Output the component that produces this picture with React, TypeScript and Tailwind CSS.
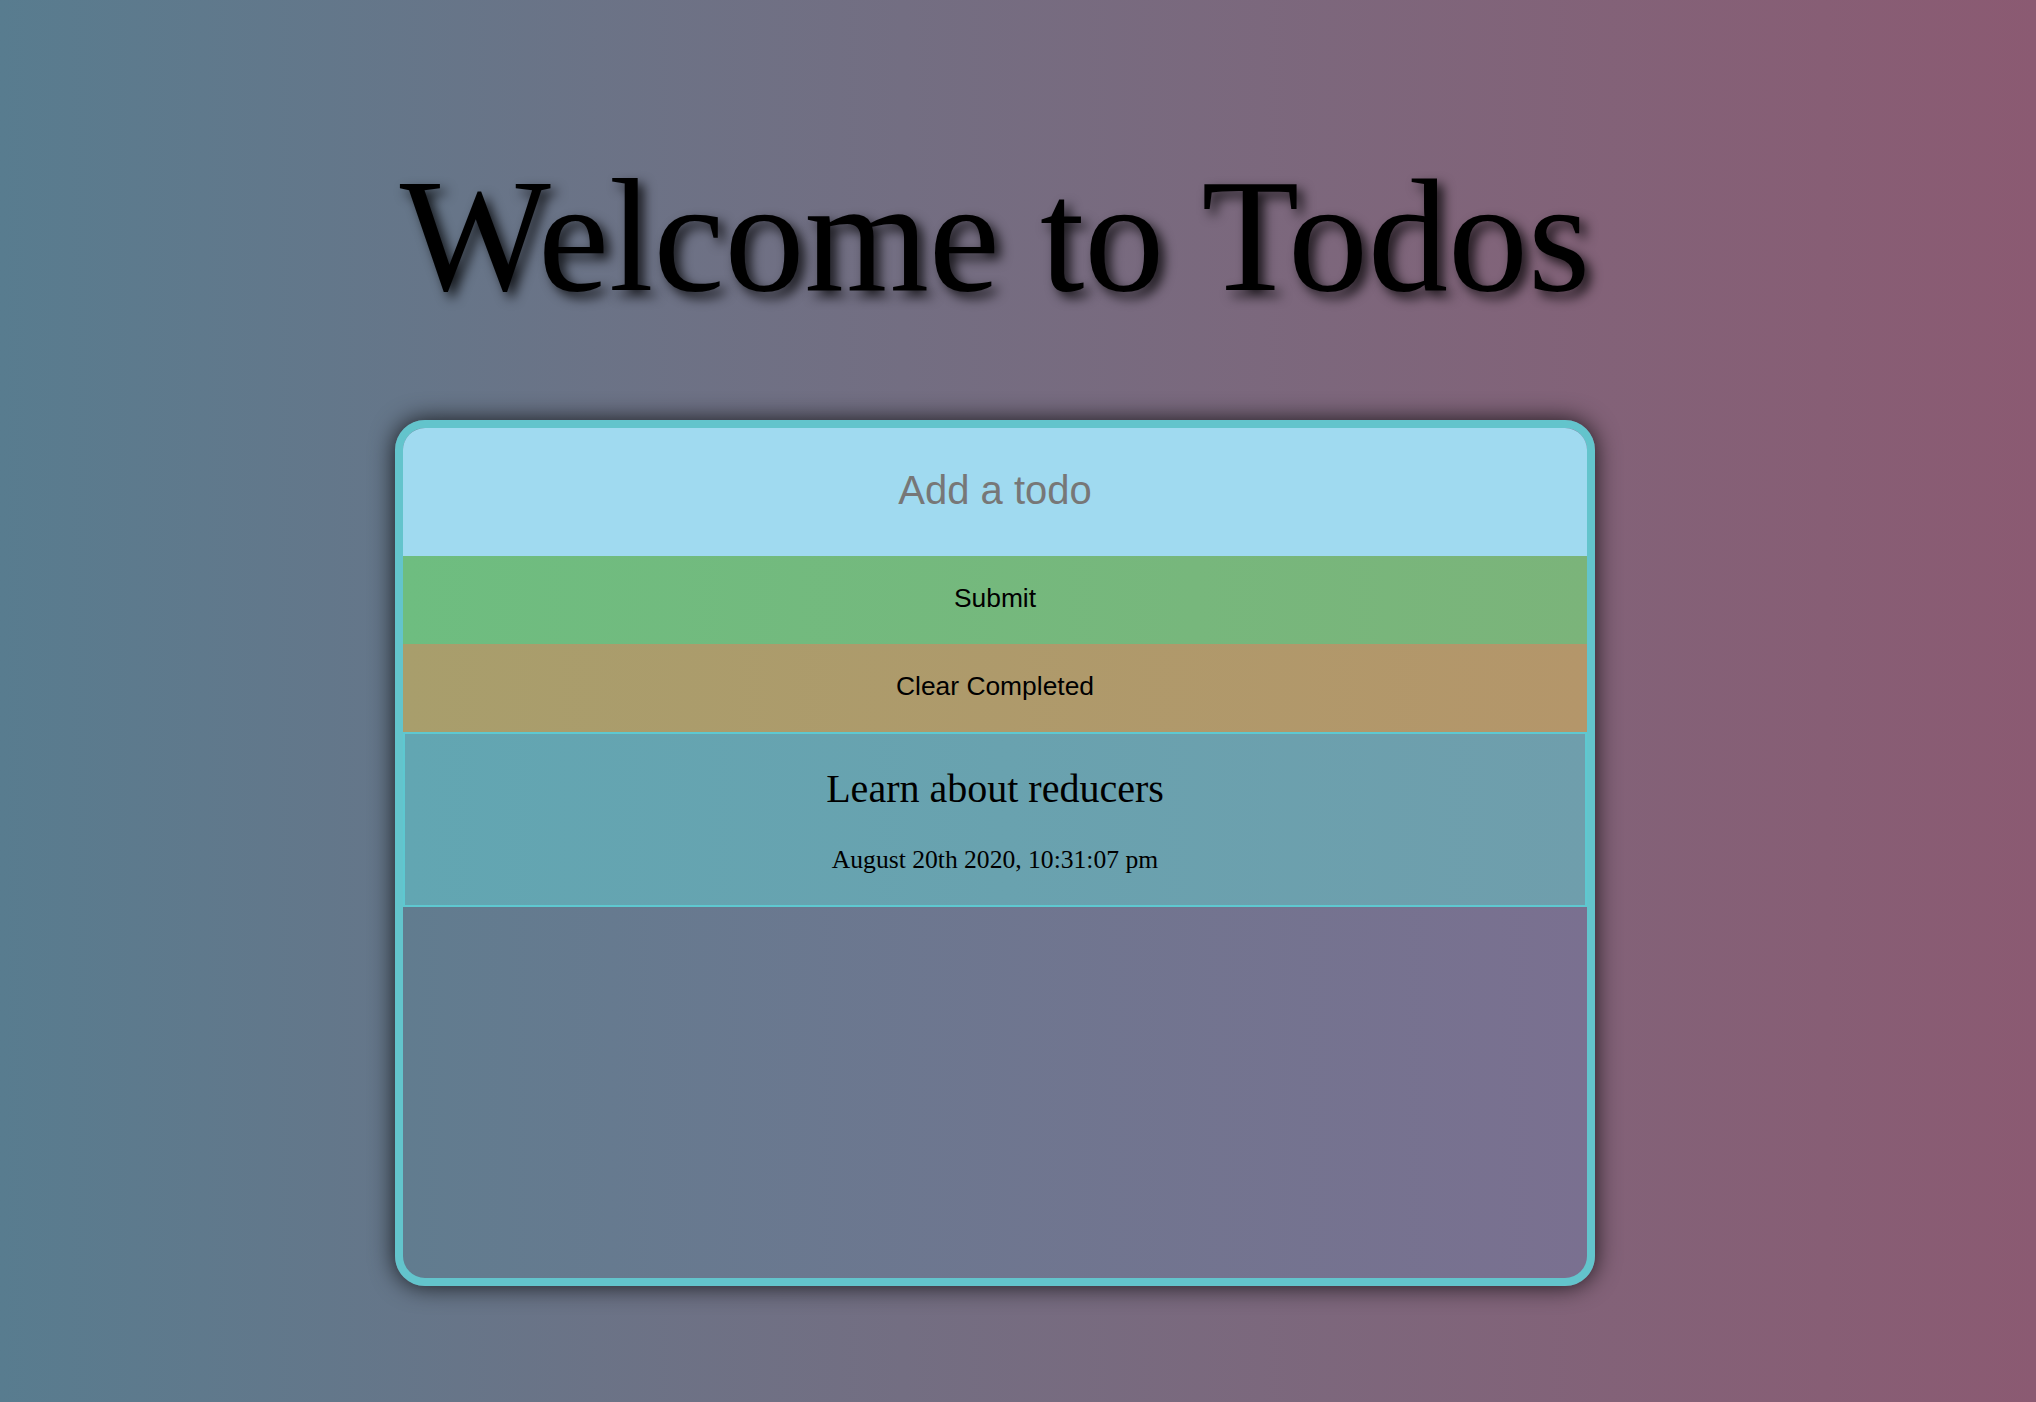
import React, { useState } from 'react';

type Todo = { id: number; task: string; completed: boolean; createdAt: string };

const initialTodos: Todo[] = [
  { id: 1, task: 'Learn about reducers', completed: false, createdAt: 'August 20th 2020, 10:31:07 pm' },
];

function TodoItem({ todo, onToggle }: { todo: Todo; onToggle: (id: number) => void }) {
  return (
    <div
      onClick={() => onToggle(todo.id)}
      className="flex flex-col items-center gap-[35px] pt-[33px] pb-[31px] border-2 border-[#5ec8d0] bg-gradient-to-r from-[#62a6b2] to-[#6f9eac] cursor-pointer font-['Liberation_Serif',serif] text-black"
    >
      <span className={todo.completed ? 'text-[40px] leading-[44px] line-through' : 'text-[40px] leading-[44px]'}>
        {todo.task}
      </span>
      <span className="text-[25.6px] leading-[28px]">{todo.createdAt}</span>
    </div>
  );
}

export default function App() {
  const [todos, setTodos] = useState<Todo[]>(initialTodos);
  const [text, setText] = useState('');

  const toggle = (id: number) =>
    setTodos(todos.map(t => (t.id === id ? { ...t, completed: !t.completed } : t)));

  const submit = (e: React.FormEvent) => {
    e.preventDefault();
    if (!text.trim()) return;
    setTodos([...todos, { id: Date.now(), task: text, completed: false, createdAt: new Date().toLocaleString() }]);
    setText('');
  };

  return (
    <main className="min-h-screen w-full bg-gradient-to-r from-[#587c8f] to-[#8b5a72] pr-[46px] pt-[148px] pb-[100px] flex flex-col items-center">
      <h1 className="font-['Liberation_Serif',serif] text-[160px] leading-[177px] text-black [text-shadow:6px_6px_12px_rgba(0,0,0,0.8)] whitespace-nowrap">
        Welcome to Todos
      </h1>

      <div className="mt-[95px] w-[1200px] h-[866px] rounded-[30px] border-[8px] border-[#63c4cc] shadow-[0_0_24px_rgba(0,0,0,0.8)] overflow-hidden bg-gradient-to-r from-[#617c8f] to-[#7a7090]">
        <form onSubmit={submit} className="flex flex-col font-['Liberation_Sans',Arial,sans-serif]">
          <input
            value={text}
            onChange={e => setText(e.target.value)}
            placeholder="Add a todo"
            className="h-[128px] w-full bg-[#a0daf0] pb-[3px] text-center text-[40px] text-black placeholder:text-[#777777] outline-none"
          />
          <button
            type="submit"
            className="h-[88px] w-full pb-[3px] bg-gradient-to-r from-[#6ebd80] to-[#7bb47a] text-[26.4px] text-black"
          >
            Submit
          </button>
          <button
            type="button"
            onClick={() => setTodos(todos.filter(t => !t.completed))}
            className="h-[88px] w-full pb-[2px] bg-gradient-to-r from-[#a89e6c] to-[#b4966a] text-[26.4px] text-black"
          >
            Clear Completed
          </button>
        </form>
        <div className="flex flex-col">
          {todos.map(t => (
            <TodoItem key={t.id} todo={t} onToggle={toggle} />
          ))}
        </div>
      </div>
    </main>
  );
}
